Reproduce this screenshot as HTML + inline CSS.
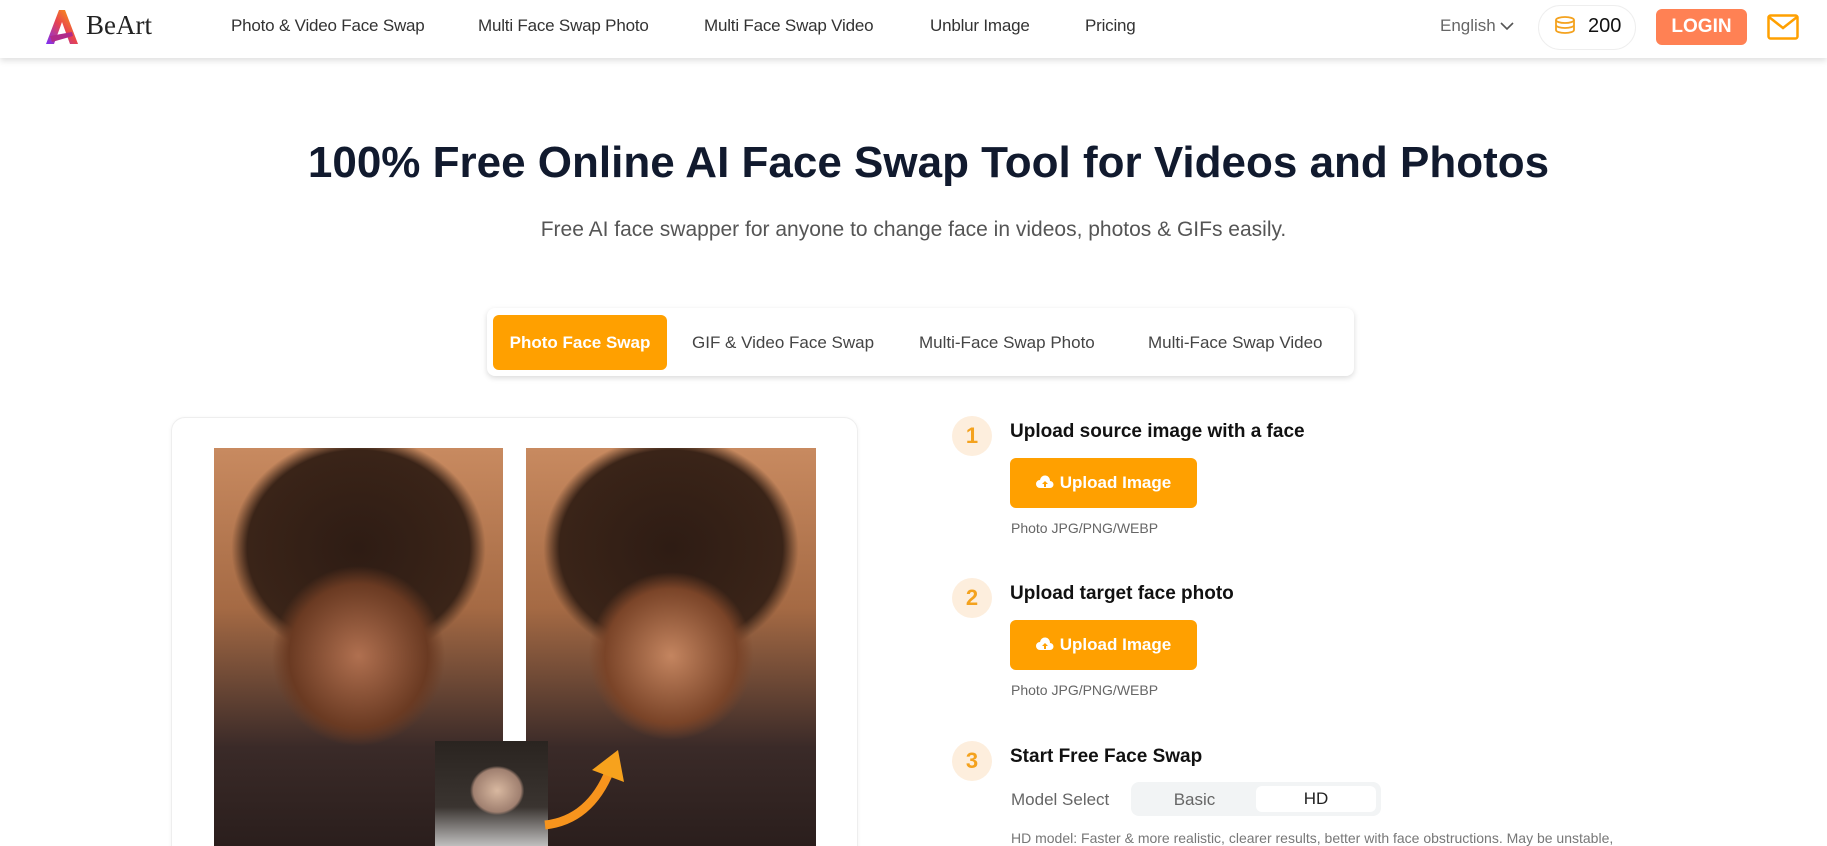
<!DOCTYPE html>
<html><head><meta charset="utf-8"><style>
*{margin:0;padding:0;box-sizing:border-box}
html,body{width:1827px;height:846px;overflow:hidden}
body{background:#fff;font-family:"Liberation Sans",sans-serif;position:relative;color:#1a1a2e}
.abs{position:absolute}
header{position:absolute;left:0;top:0;width:1827px;height:58px;background:#fff;box-shadow:0 3px 6px rgba(0,0,0,.12);z-index:2}
.nav{position:absolute;top:16px;font-size:17px;color:#333;letter-spacing:-.2px}
.tabs{position:absolute;left:487px;top:308px;width:867px;height:68px;border-radius:8px;background:#fff;box-shadow:0 2px 6px rgba(0,0,0,.15)}
.tab{position:absolute;top:0;height:55px;line-height:55px;font-size:17px;color:#444;white-space:nowrap}
.circle{position:absolute;left:952px;width:40px;height:40px;border-radius:50%;background:#fdeedd;color:#f4a21e;font-weight:bold;font-size:22px;text-align:center;line-height:40px}
.stitle{position:absolute;left:1010px;font-size:19px;font-weight:bold;color:#111}
.btn{position:absolute;left:1010px;width:187px;height:50px;border-radius:6px;background:#ffa000;color:#fff;font-weight:bold;font-size:17px;line-height:50px;text-align:center}
.cap{position:absolute;left:1011px;font-size:14px;color:#666}
</style></head><body>
<header>
<svg class="abs" style="left:42px;top:8px" width="38" height="38" viewBox="0 0 38 38"><defs><linearGradient id="g" x1="0" y1="1" x2="1" y2="0"><stop offset="0" stop-color="#7b2ff7"/><stop offset=".5" stop-color="#e8434f"/><stop offset="1" stop-color="#ffb000"/></linearGradient></defs><path d="M17 2 L23 2 L36 36 L28 36 L20 14 L12 36 L4 36 Z" fill="url(#g)"/><path d="M8 28 L30 24 L31 28 L10 34 Z" fill="#b02a8a"/></svg>
<div class="abs" style="left:86px;top:10px;font-family:'Liberation Serif',serif;font-size:27px;color:#222">BeArt</div>
<div class="nav" style="left:231px">Photo &amp; Video Face Swap</div>
<div class="nav" style="left:478px">Multi Face Swap Photo</div>
<div class="nav" style="left:704px">Multi Face Swap Video</div>
<div class="nav" style="left:930px">Unblur Image</div>
<div class="nav" style="left:1085px">Pricing</div>
<div class="abs" style="left:1440px;top:16px;font-size:17px;color:#666">English <svg width="14" height="9" viewBox="0 0 14 9"><path d="M1 1l6 6 6-6" stroke="#555" stroke-width="1.6" fill="none"/></svg></div>
<div class="abs" style="left:1538px;top:5px;width:98px;height:45px;border:1px solid #eee;border-radius:23px"></div>
<svg class="abs" style="left:1553px;top:16px" width="24" height="22" viewBox="0 0 24 22"><g fill="none" stroke="#f4a21e" stroke-width="1.8"><ellipse cx="12" cy="4" rx="9" ry="3"/><path d="M3 4v5c0 1.7 4 3 9 3s9-1.3 9-3V4M3 9v5c0 1.7 4 3 9 3s9-1.3 9-3V9"/></g></svg>
<div class="abs" style="left:1588px;top:15px;font-size:20px;color:#111">200</div>
<div class="abs" style="left:1656px;top:9px;width:91px;height:36px;border-radius:6px;background:#ff8154;color:#fff;font-weight:bold;font-size:19px;text-align:center;line-height:36px">LOGIN</div>
<svg class="abs" style="left:1767px;top:14px" width="32" height="26" viewBox="0 0 32 26"><rect x="1.5" y="1.5" width="29" height="23" rx="2" fill="none" stroke="#ffa000" stroke-width="2.5"/><path d="M2 3l14 11 14-11" fill="none" stroke="#ffa000" stroke-width="2.5"/></svg>
</header>
<div class="abs" style="left:15px;width:1827px;top:138px;text-align:center;font-size:44px;font-weight:bold;color:#111a2e">100% Free Online AI Face Swap Tool for Videos and Photos</div>
<div class="abs" style="left:0;width:1827px;top:218px;text-align:center;font-size:21px;color:#555">Free AI face swapper for anyone to change face in videos, photos &amp; GIFs easily.</div>
<div class="tabs">
<div class="tab" style="left:6px;top:7px;width:174px;background:#ffa000;color:#fff;border-radius:6px;font-weight:bold;text-align:center">Photo Face Swap</div>
<div class="tab" style="left:205px;top:7px">GIF &amp; Video Face Swap</div>
<div class="tab" style="left:432px;top:7px">Multi-Face Swap Photo</div>
<div class="tab" style="left:661px;top:7px">Multi-Face Swap Video</div>
</div>
<div class="abs" style="left:171px;top:417px;width:687px;height:460px;border:1px solid #eee;border-radius:14px;box-shadow:0 1px 4px rgba(0,0,0,.06)"></div>
<div class="abs" style="left:214px;top:448px;width:289px;height:400px;background:radial-gradient(ellipse 40% 30% at 50% 52%,#b07050,#6a3a22 60%,transparent 75%),radial-gradient(ellipse 55% 35% at 50% 25%,#2e1c14,#3a2418 70%,transparent 80%),linear-gradient(180deg,#c88a60 0%,#a56a44 40%,#3a2a28 75%,#2a1e1c 100%)"></div>
<div class="abs" style="left:526px;top:448px;width:290px;height:400px;background:radial-gradient(ellipse 38% 28% at 50% 52%,#c48560,#7a4428 60%,transparent 75%),radial-gradient(ellipse 55% 35% at 50% 25%,#2e1c14,#3a2418 70%,transparent 80%),linear-gradient(180deg,#c88a60 0%,#a56a44 40%,#3a2a28 75%,#2a1e1c 100%)"></div>
<div class="abs" style="left:435px;top:741px;width:113px;height:110px;background:radial-gradient(ellipse 30% 28% at 55% 45%,#d8b8a0,#a08070 70%,transparent 80%),linear-gradient(180deg,#2a2420,#3a3430 60%,#d0d0d0)"></div>
<svg class="abs" style="left:540px;top:740px" width="100" height="90" viewBox="0 0 100 90"><path d="M5 85 Q50 80 70 30" stroke="#f7941d" stroke-width="9" fill="none"/><path d="M52 30 L78 10 L84 42 Z" fill="#f7a21d"/></svg>
<div class="circle" style="top:416px">1</div>
<div class="stitle" style="top:421px">Upload source image with a face</div>
<div class="btn" style="top:458px"><svg width="18" height="14" viewBox="0 0 18 14" style="vertical-align:-1px;margin-right:6px"><path d="M4 13a4 4 0 0 1 0-8 5 5 0 0 1 10 1 3.5 3.5 0 0 1 0 7z" fill="#fff"/><path d="M9 6l-3 3h2v3h2V9h2z" fill="#ffa000"/></svg>Upload Image</div>
<div class="cap" style="top:520px">Photo JPG/PNG/WEBP</div>
<div class="circle" style="top:578px">2</div>
<div class="stitle" style="top:583px">Upload target face photo</div>
<div class="btn" style="top:620px"><svg width="18" height="14" viewBox="0 0 18 14" style="vertical-align:-1px;margin-right:6px"><path d="M4 13a4 4 0 0 1 0-8 5 5 0 0 1 10 1 3.5 3.5 0 0 1 0 7z" fill="#fff"/><path d="M9 6l-3 3h2v3h2V9h2z" fill="#ffa000"/></svg>Upload Image</div>
<div class="cap" style="top:682px">Photo JPG/PNG/WEBP</div>
<div class="circle" style="top:741px">3</div>
<div class="stitle" style="top:746px">Start Free Face Swap</div>
<div class="abs" style="left:1011px;top:790px;font-size:17px;color:#666">Model Select</div>
<div class="abs" style="left:1131px;top:782px;width:250px;height:34px;border-radius:8px;background:#f2f4f5"></div>
<div class="abs" style="left:1132px;top:790px;width:125px;text-align:center;font-size:17px;color:#666">Basic</div>
<div class="abs" style="left:1256px;top:786px;width:120px;height:26px;border-radius:6px;background:#fff;text-align:center;font-size:17px;line-height:26px;color:#222">HD</div>
<div class="abs" style="left:1011px;top:830px;font-size:14px;color:#777;white-space:nowrap">HD model: Faster &amp; more realistic, clearer results, better with face obstructions. May be unstable,</div>
</body></html>
